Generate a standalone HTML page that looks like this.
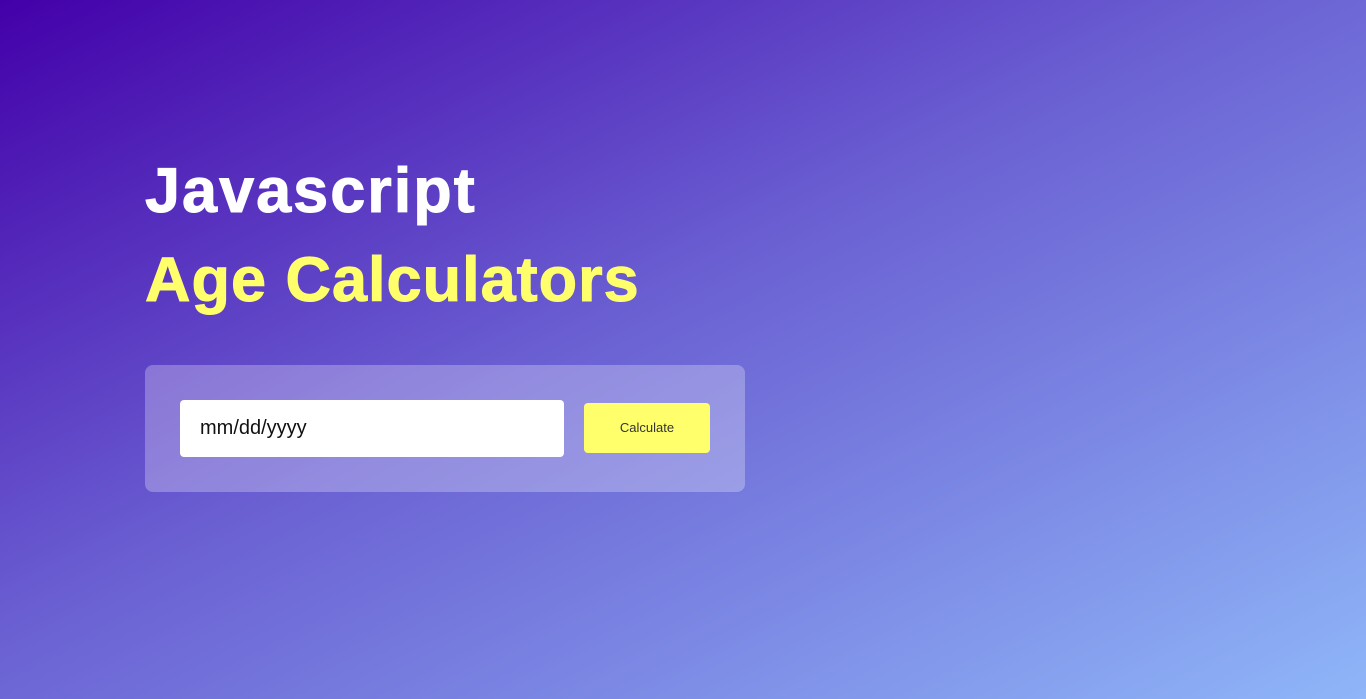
<!DOCTYPE html>
<html><head><style>
html,body{margin:0;padding:0;width:1366px;height:699px;overflow:hidden}
body{background:linear-gradient(to bottom right,#4300a9 0%,#6a5fd2 45%,#8fb6f8 100%);font-family:"Liberation Sans",sans-serif;position:relative}
h1{position:absolute;left:145px;margin:0;font-weight:700;font-size:63px;line-height:1;-webkit-text-stroke:1px currentColor}
.t1{top:160px;color:#fff;letter-spacing:2px}
.t2{top:249px;color:#ffff6c;letter-spacing:1px}
.card{position:absolute;left:145px;top:365px;width:600px;height:127px;border-radius:8px;background:rgba(255,255,255,0.27)}
.inp{position:absolute;left:35px;top:35px;width:384px;height:57px;background:#fff;border-radius:4px;font-size:20px;color:#111;line-height:57px;padding-left:20px;box-sizing:border-box}
.btn{position:absolute;left:439px;top:38px;width:126px;height:50px;background:#ffff6c;border-radius:4px;font-size:13px;color:#333;text-align:center;line-height:50px}
</style></head><body>
<h1 class="t1">Javascript</h1>
<h1 class="t2">Age Calculators</h1>
<div class="card"><div class="inp">mm/dd/yyyy</div><div class="btn">Calculate</div></div>
</body></html>
